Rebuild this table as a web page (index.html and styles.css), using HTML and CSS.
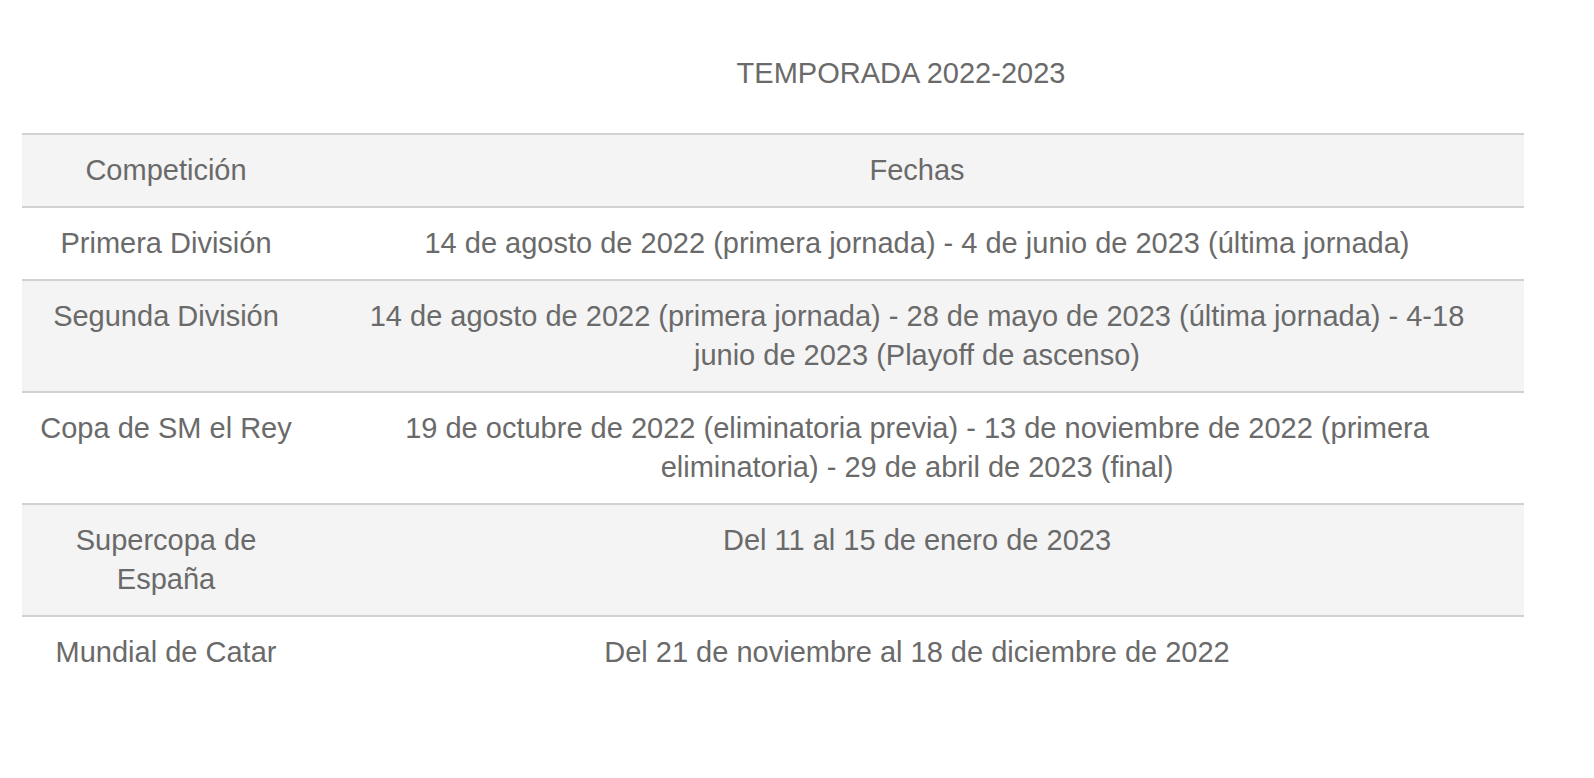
FILE: index.html
```html
<!DOCTYPE html>
<html lang="es">
<head>
<meta charset="utf-8">
<title>Temporada 2022-2023</title>
<link rel="stylesheet" href="styles.css">
</head>
<body>
<div class="page">
  <h2 class="title">TEMPORADA 2022-2023</h2>
  <table class="season">
    <colgroup>
      <col class="c1">
      <col class="c2">
    </colgroup>
    <tr class="gray">
      <td>Competición</td>
      <td>Fechas</td>
    </tr>
    <tr>
      <td>Primera División</td>
      <td>14 de agosto de 2022 (primera jornada) - 4 de junio de 2023 (última jornada)</td>
    </tr>
    <tr class="gray">
      <td>Segunda División</td>
      <td>14 de agosto de 2022 (primera jornada) - 28 de mayo de 2023 (última jornada) - 4-18 junio de 2023 (Playoff de ascenso)</td>
    </tr>
    <tr>
      <td>Copa de SM el Rey</td>
      <td>19 de octubre de 2022 (eliminatoria previa) - 13 de noviembre de 2022 (primera eliminatoria) - 29 de abril de 2023 (final)</td>
    </tr>
    <tr class="gray">
      <td>Supercopa de España</td>
      <td>Del 11 al 15 de enero de 2023</td>
    </tr>
    <tr>
      <td>Mundial de Catar</td>
      <td>Del 21 de noviembre al 18 de diciembre de 2022</td>
    </tr>
  </table>
</div>
</body>
</html>
```

FILE: styles.css
```css
html, body {
  margin: 0;
  padding: 0;
  background: #ffffff;
}
body {
  font-family: "Liberation Sans", Arial, Helvetica, sans-serif;
  color: #6a6a6a;
}
.page {
  padding: 0 70px 0 22px;
}
.title {
  margin: 0;
  padding: 54px 0 0 256px;
  height: 133px;
  box-sizing: border-box;
  width: 1502px;
  text-align: center;
  font-size: 29px;
  font-weight: normal;
  line-height: 39px;
}
.season {
  width: 1502px;
  border-collapse: collapse;
  table-layout: fixed;
  font-size: 29px;
  line-height: 39px;
}
.c1 { width: 288px; }
.c2 { width: 1214px; }
.season td {
  border-top: 2px solid #d2d2d2;
  padding: 16px 16px;
  text-align: center;
  vertical-align: top;
}
.season td + td {
  padding-left: 30px;
  padding-right: 30px;
}
.season tr.gray td {
  background: #f4f4f4;
}
```
